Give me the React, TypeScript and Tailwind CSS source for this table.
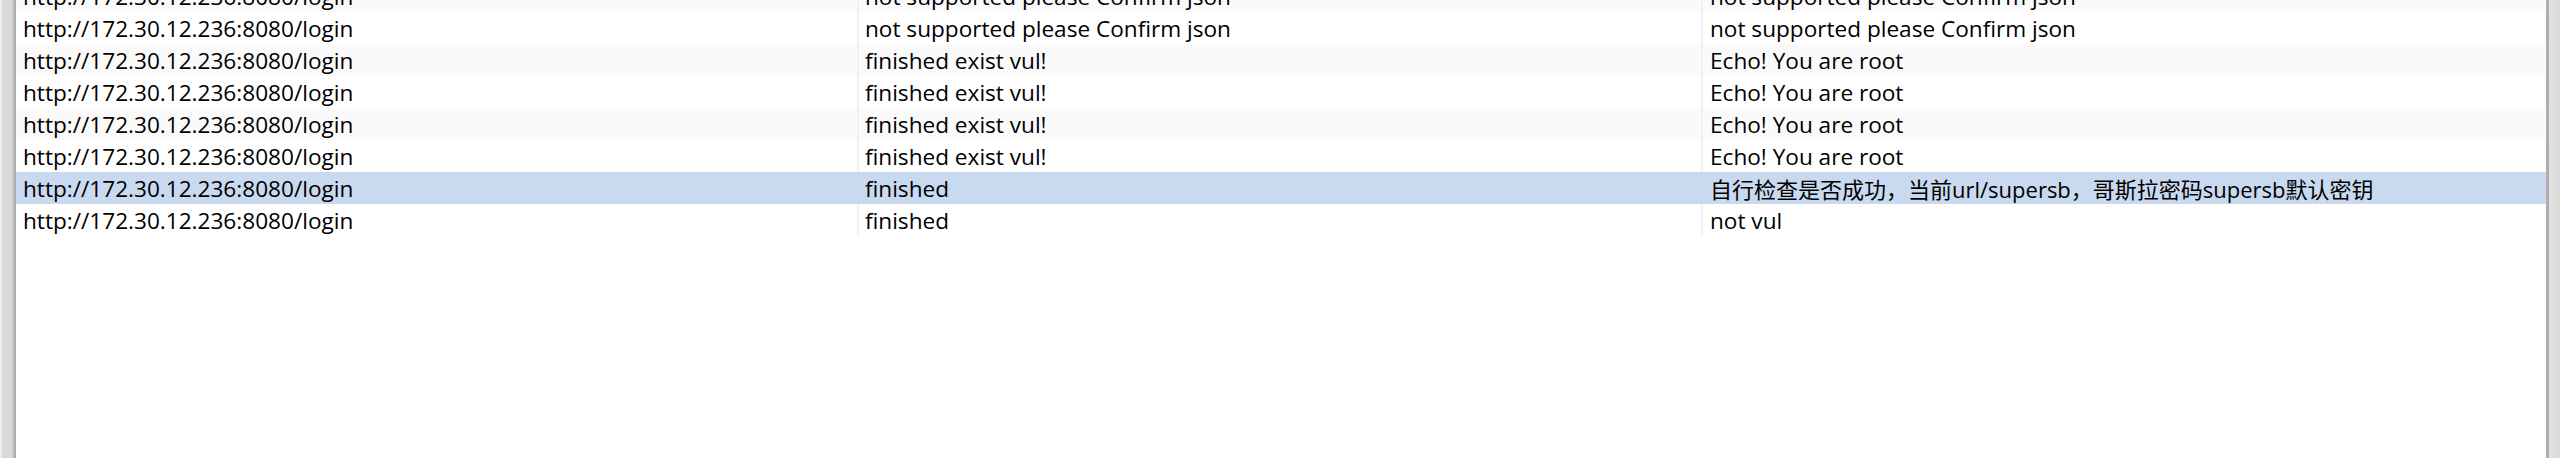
import React from 'react';

type Row = { url: string; status: string; result: string; cjk?: boolean };

const url = "http://172.30.12.236:8080/login";

const rows: Row[] = [
    { url, status: "not supported please Confirm json", result: "not supported please Confirm json" },
    { url, status: "not supported please Confirm json", result: "not supported please Confirm json" },
    { url, status: "finished exist vul!", result: "Echo! You are root" },
    { url, status: "finished exist vul!", result: "Echo! You are root" },
    { url, status: "finished exist vul!", result: "Echo! You are root" },
    { url, status: "finished exist vul!", result: "Echo! You are root" },
    { url, status: "finished", result: "自行检查是否成功，当前url/supersb，哥斯拉密码supersb默认密钥", cjk: true },
    { url, status: "finished", result: "not vul" },
];

const SELECTED = 6;

export default function App() {
    return (
        <div
            className="flex w-[2560px] h-[458px] overflow-hidden bg-white text-black"
            style={{ fontFamily: '"Open Sans", "Noto Sans CJK SC", sans-serif' }}
        >
            {/* left frame edge */}
            <div className="flex shrink-0">
                <div className="w-[2px] bg-[#efefef]" />
                <div className="w-[10px] bg-[#d9d9d9]" />
                <div className="w-[2px] bg-[#c6c6c6]" />
                <div className="w-[2px] bg-[#acacac]" />
            </div>

            <div className="flex-1 flex flex-col overflow-hidden">
                <div className="flex flex-col mt-[-20px]">
                    {rows.map((r, i) => {
                        const bg = i === SELECTED ? "bg-[#c9daf0]" : i % 2 === 0 ? "bg-[#fafafa]" : "bg-white";
                        const sep = i === SELECTED ? "bg-transparent" : "bg-[#f2f2f2]";
                        return (
                            <div key={i} className={`flex h-[32px] items-center text-[22.6px] leading-[32px] whitespace-nowrap ${bg}`}>
                                <div className="w-[841px] pl-[7px] pt-[2px] overflow-hidden">{r.url}</div>
                                <div className={`w-[2px] self-stretch ${sep}`} />
                                <div className="w-[842px] pl-[6px] pt-[2px] overflow-hidden">{r.status}</div>
                                <div className={`w-[2px] self-stretch ${sep}`} />
                                <div className={`flex-1 pl-[7px] pt-[2px] overflow-hidden ${r.cjk ? "text-[22px]" : ""}`}>{r.result}</div>
                            </div>
                        );
                    })}
                </div>
            </div>

            {/* right frame edge */}
            <div className="flex shrink-0">
                <div className="w-[3px] bg-[#b3adad]" />
                <div className="w-[11px] bg-gradient-to-r from-[#e4e4e4] to-[#dadada]" />
            </div>
        </div>
    );
}
